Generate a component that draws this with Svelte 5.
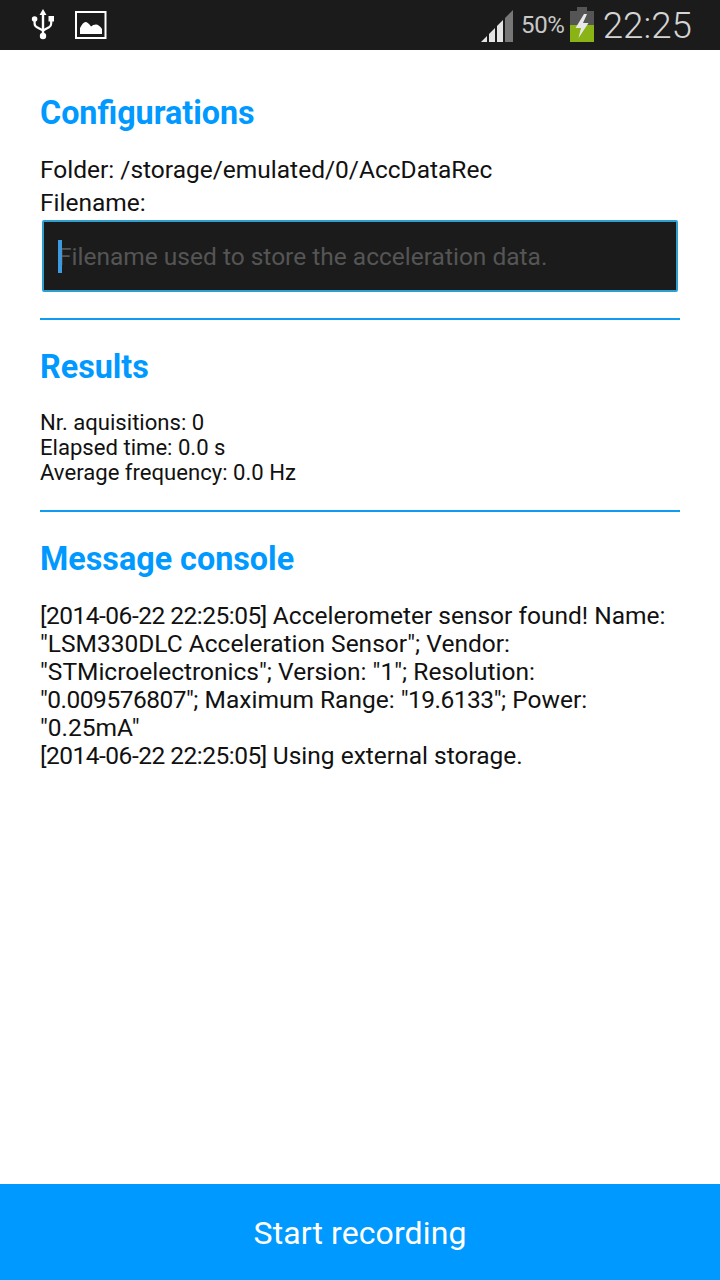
<script>
  const results = ['Nr. aquisitions: 0', 'Elapsed time: 0.0 s', 'Average frequency: 0.0 Hz'];
  const stamp = '[2014-06-22 22:25:05]';
  const log = [
    [{ t: stamp, n: true }, { t: ' Accelerometer sensor found! Name:' }],
    [{ t: '"LSM330DLC Acceleration Sensor"; Vendor:' }],
    [{ t: '"STMicroelectronics"; Version: "1"; Resolution:' }],
    [{ t: '"0.009576807"', n: true }, { t: '; Maximum Range: ' }, { t: '"19.6133"', n: true }, { t: '; Power:' }],
    [{ t: '"0.25mA"' }],
    [{ t: stamp, n: true }, { t: ' Using external storage.' }]
  ];
</script>

<div class="screen">
  <header class="status">
    <div class="left">
      <svg class="usb" width="24" height="34" viewBox="0 0 24 34">
        <path d="M12 1 L15.5 7 H13.2 V27 H10.8 V7 H8.5 Z" fill="#fff"/>
        <circle cx="12" cy="28" r="3.2" fill="#fff"/>
        <circle cx="3.6" cy="11" r="2.8" fill="#fff"/>
        <rect x="17.5" y="8" width="5.5" height="5.5" fill="#fff"/>
        <path d="M3.6 12 V15.5 Q3.6 18 6 19.3 L12 22.5 L18 19.3 Q20.2 18 20.2 15.5 V12" fill="none" stroke="#fff" stroke-width="2.2"/>
      </svg>
      <svg class="pic" width="32" height="28" viewBox="0 0 32 28">
        <rect x="1" y="1" width="29.5" height="26" fill="#1b1b1b" stroke="#fff" stroke-width="2"/>
        <path d="M5 23 V17 Q8 11 10.5 11 Q13 11 16 15.5 Q18 13.5 21 13.5 Q24 13.5 27 18 V23 Z" fill="#fff"/>
      </svg>
    </div>
    <div class="right">
      <svg class="signal" width="34" height="34" viewBox="0 0 34 34">
        <path d="M1 33 L7 27 V33 Z" fill="#e4e4e4"/>
        <path d="M9 25 L15 19 V33 H9 Z" fill="#e4e4e4"/>
        <path d="M17 17 L23 11 V33 H17 Z" fill="#e4e4e4"/>
        <path d="M25 9 L33 1 V33 H25 Z" fill="#777"/>
      </svg>
      <span class="pct">50%</span>
      <svg class="batt" width="26" height="36" viewBox="0 0 26 36">
        <rect x="8" y="0" width="10" height="4" fill="#555"/>
        <rect x="1" y="4" width="24" height="14" fill="#555"/>
        <rect x="1" y="18" width="24" height="17" fill="#8ab416"/>
        <path d="M15 7 L6.5 21 H12 L9.5 31 L19.5 16 H14 L18 7 Z" fill="#e8e8e8"/>
      </svg>
      <span class="clock">22:25</span>
    </div>
  </header>

  <main class="content">
    <section class="config">
      <h2>Configurations</h2>
      <p class="line folder">Folder: /storage/emulated/0/AccDataRec</p>
      <p class="line">Filename:</p>
      <div class="input">
        <span class="caret"></span>
        <span class="placeholder">Filename used to store the acceleration data.</span>
      </div>
    </section>
    <section class="results">
      <h2>Results</h2>
      <div class="rows">
        {#each results as r}
          <p>{r}</p>
        {/each}
      </div>
    </section>
    <section class="console">
      <h2>Message console</h2>
      <div class="log">
        {#each log as row}
          <p>{#each row as s}<span class:num={s.n}>{s.t}</span>{/each}</p>
        {/each}
      </div>
    </section>
  </main>

  <button class="record">Start recording</button>
</div>

<style>
  :global(body) {
    margin: 0;
    background: #fff;
  }
  .screen {
    width: 720px;
    height: 1280px;
    display: flex;
    flex-direction: column;
    font-family: Roboto, sans-serif;
    color: #111;
    overflow: hidden;
  }
  .status {
    height: 50px;
    flex: none;
    background: #1b1b1b;
    display: flex;
    justify-content: space-between;
    align-items: center;
    padding: 0 28px 0 31px;
  }
  .left, .right {
    display: flex;
    align-items: center;
  }
  .left {
    gap: 20px;
  }
  .signal {
    margin-top: 2px;
  }
  .pct {
    font-size: 24px;
    color: #c8c8c8;
    margin-left: 7px;
    letter-spacing: -0.3px;
  }
  .batt {
    margin-left: 4px;
  }
  .clock {
    font-size: 36.8px;
    font-weight: 300;
    color: #d4d4d4;
    margin-left: 8px;
  }
  .content {
    flex: 1;
    padding: 0 40px;
    min-height: 0;
  }
  section {
    border-bottom: 2px solid #0f9bf0;
  }
  .console {
    border-bottom: 0;
  }
  h2 {
    margin: 0;
    font-size: 32.3px;
    line-height: 40px;
    font-weight: 700;
    color: #0099ff;
  }
  p {
    margin: 0;
  }
  .config {
    padding-top: 43px;
    height: 225px;
  }
  .line {
    font-size: 24.5px;
    line-height: 33px;
  }
  .folder {
    margin-top: 20px;
  }
  .input {
    margin: 1px 2px 0;
    height: 68px;
    background: #1b1b1b;
    border: 2px solid #2f9fd0;
    border-radius: 2px;
    display: flex;
    align-items: center;
    padding-left: 14px;
    position: relative;
  }
  .caret {
    position: absolute;
    left: 14px;
    top: 18px;
    width: 4px;
    height: 33px;
    background: #3d9ae0;
  }
  .placeholder {
    font-size: 24.5px;
    color: #555;
    white-space: nowrap;
  }
  .results {
    height: 163px;
    padding-top: 27px;
  }
  .rows {
    margin-top: 23px;
    font-size: 22.1px;
    line-height: 25px;
  }
  .console {
    padding-top: 27px;
  }
  .log {
    margin-top: 23px;
    font-size: 24.5px;
    line-height: 28px;
    white-space: pre;
  }
  .num {
    letter-spacing: -0.5px;
  }
  .record {
    flex: none;
    height: 96px;
    width: 100%;
    border: 0;
    padding: 2px 0 0;
    background: #0099ff;
    color: #fff;
    font: 400 32px Roboto, sans-serif;
    letter-spacing: 0.1px;
  }
</style>
